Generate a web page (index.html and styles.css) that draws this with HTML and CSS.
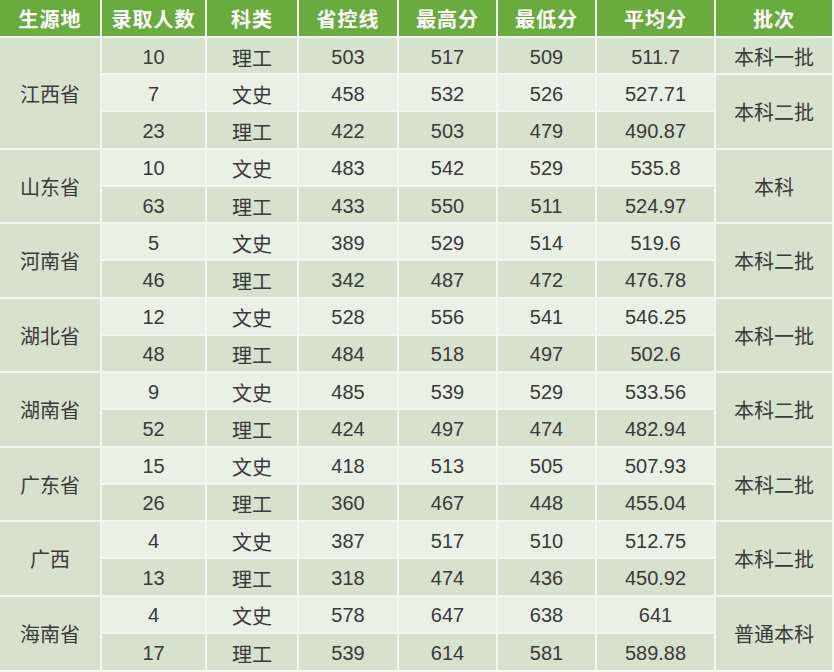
FILE: index.html
```html
<!DOCTYPE html>
<html lang="zh-CN">
<head>
<meta charset="utf-8">
<title>录取分数</title>
<link rel="stylesheet" href="styles.css">
</head>
<body>
<table class="score-table">
  <colgroup>
    <col class="c1"><col class="c2"><col class="c3"><col class="c4"><col class="c5"><col class="c6"><col class="c7"><col class="c8">
  </colgroup>
  <thead>
    <tr class="head">
      <th>生源地</th><th>录取人数</th><th>科类</th><th>省控线</th><th>最高分</th><th>最低分</th><th>平均分</th><th>批次</th>
    </tr>
  </thead>
  <tbody>
    <tr class="dark"><td class="merge" rowspan="3">江西省</td><td>10</td><td>理工</td><td>503</td><td>517</td><td>509</td><td>511.7</td><td class="merge">本科一批</td></tr>
    <tr class="light"><td>7</td><td>文史</td><td>458</td><td>532</td><td>526</td><td>527.71</td><td class="merge" rowspan="2">本科二批</td></tr>
    <tr class="dark"><td>23</td><td>理工</td><td>422</td><td>503</td><td>479</td><td>490.87</td></tr>

    <tr class="light"><td class="merge" rowspan="2">山东省</td><td>10</td><td>文史</td><td>483</td><td>542</td><td>529</td><td>535.8</td><td class="merge" rowspan="2">本科</td></tr>
    <tr class="dark"><td>63</td><td>理工</td><td>433</td><td>550</td><td>511</td><td>524.97</td></tr>

    <tr class="light"><td class="merge" rowspan="2">河南省</td><td>5</td><td>文史</td><td>389</td><td>529</td><td>514</td><td>519.6</td><td class="merge" rowspan="2">本科二批</td></tr>
    <tr class="dark"><td>46</td><td>理工</td><td>342</td><td>487</td><td>472</td><td>476.78</td></tr>

    <tr class="light"><td class="merge" rowspan="2">湖北省</td><td>12</td><td>文史</td><td>528</td><td>556</td><td>541</td><td>546.25</td><td class="merge" rowspan="2">本科一批</td></tr>
    <tr class="dark"><td>48</td><td>理工</td><td>484</td><td>518</td><td>497</td><td>502.6</td></tr>

    <tr class="light"><td class="merge" rowspan="2">湖南省</td><td>9</td><td>文史</td><td>485</td><td>539</td><td>529</td><td>533.56</td><td class="merge" rowspan="2">本科二批</td></tr>
    <tr class="dark"><td>52</td><td>理工</td><td>424</td><td>497</td><td>474</td><td>482.94</td></tr>

    <tr class="light"><td class="merge" rowspan="2">广东省</td><td>15</td><td>文史</td><td>418</td><td>513</td><td>505</td><td>507.93</td><td class="merge" rowspan="2">本科二批</td></tr>
    <tr class="dark"><td>26</td><td>理工</td><td>360</td><td>467</td><td>448</td><td>455.04</td></tr>

    <tr class="light"><td class="merge" rowspan="2">广西</td><td>4</td><td>文史</td><td>387</td><td>517</td><td>510</td><td>512.75</td><td class="merge" rowspan="2">本科二批</td></tr>
    <tr class="dark"><td>13</td><td>理工</td><td>318</td><td>474</td><td>436</td><td>450.92</td></tr>

    <tr class="light"><td class="merge" rowspan="2">海南省</td><td>4</td><td>文史</td><td>578</td><td>647</td><td>638</td><td>641</td><td class="merge" rowspan="2">普通本科</td></tr>
    <tr class="dark"><td>17</td><td>理工</td><td>539</td><td>614</td><td>581</td><td>589.88</td></tr>
  </tbody>
</table>
</body>
</html>
```

FILE: styles.css
```css
html, body {
  margin: 0;
  padding: 0;
  background: #f7f9f4;
}

.score-table {
  width: 832px;
  height: 670px;
  table-layout: fixed;
  border-collapse: collapse;
  border-style: hidden;
  font-family: "Liberation Sans", "Noto Sans CJK SC", sans-serif;
  color: #3a3a3a;
}

.c1 { width: 101px; }
.c2 { width: 105px; }
.c3 { width: 92px; }
.c4 { width: 100px; }
.c5 { width: 99px; }
.c6 { width: 99px; }
.c7 { width: 119px; }
.c8 { width: 117px; }

.score-table th,
.score-table td {
  border: 2px solid #f4f7f1;
  padding: 0;
  text-align: center;
  vertical-align: middle;
}

.head {
  height: 37px;
}

.head th {
  background: #6aab3e;
  color: #ffffff;
  font-family: "Noto Sans CJK SC", sans-serif;
  font-weight: 700;
  font-size: 20px;
  letter-spacing: 1px;
  padding-top: 1px;
}

.score-table tbody tr {
  height: 37.2px;
}

.score-table td {
  font-size: 20px;
  padding-top: 3px;
}

.dark td {
  background: #d6e2cd;
}

.light td {
  background: #e9f0e4;
}

.score-table td.merge {
  background: #d7e2ce;
  font-size: 20px;
  padding-top: 1px;
}
```
